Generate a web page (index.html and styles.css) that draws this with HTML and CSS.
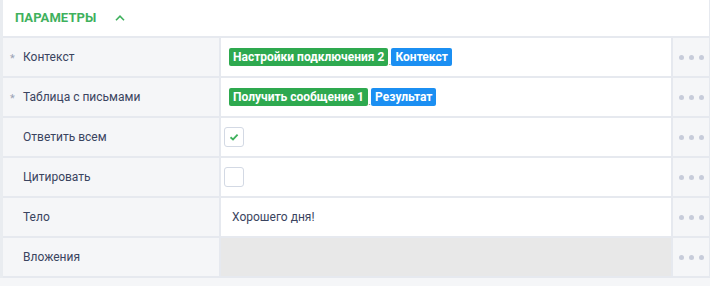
FILE: index.html
```html
<!DOCTYPE html>
<html lang="ru">
<head>
    <meta charset="UTF-8">
    <title>Параметры</title>
    <link rel="stylesheet" href="styles.css">
</head>
<body>
    <div class="panel">
        <div class="panel-header">
            <span class="panel-title">Параметры</span>
            <svg class="chevron" width="10" height="6" viewBox="0 0 10 6"><path d="M1 5.2 L5 1.2 L9 5.2" fill="none" stroke="#3fb15d" stroke-width="1.6"/></svg>
        </div>
        <div class="rows">
            <div class="row">
                <div class="label"><span class="req">*</span>Контекст</div>
                <div class="value">
                    <span class="badge green">Настройки подключения 2</span><span class="sep">.</span><span class="badge blue">Контекст</span>
                </div>
                <div class="more"><i></i><i></i><i></i></div>
            </div>
            <div class="row">
                <div class="label"><span class="req">*</span>Таблица с письмами</div>
                <div class="value">
                    <span class="badge green">Получить сообщение 1</span><span class="sep">.</span><span class="badge blue">Результат</span>
                </div>
                <div class="more"><i></i><i></i><i></i></div>
            </div>
            <div class="row">
                <div class="label">Ответить всем</div>
                <div class="value check-cell">
                    <span class="checkbox">
                        <svg width="10" height="8" viewBox="0 0 10 8"><path d="M1.5 4.2 L4 6.4 L8.6 1.6" fill="none" stroke="#3fb15d" stroke-width="1.8"/></svg>
                    </span>
                </div>
                <div class="more"><i></i><i></i><i></i></div>
            </div>
            <div class="row">
                <div class="label">Цитировать</div>
                <div class="value check-cell"><span class="checkbox"></span></div>
                <div class="more"><i></i><i></i><i></i></div>
            </div>
            <div class="row">
                <div class="label">Тело</div>
                <div class="value text">Хорошего дня!</div>
                <div class="more"><i></i><i></i><i></i></div>
            </div>
            <div class="row">
                <div class="label">Вложения</div>
                <div class="value disabled"></div>
                <div class="more"><i></i><i></i><i></i></div>
            </div>
        </div>
    </div>
</body>
</html>
```

FILE: styles.css
```css
* {
    margin: 0;
    box-sizing: border-box;
}
body {
    font-family: Roboto, "Liberation Sans", sans-serif;
    font-size: 12px;
    color: #3a4460;
    background: #f5f6f8;
}
.panel {
    border-left: 3px solid #e9ecf0;
    border-right: 1px solid #e6e9ef;
    background: #fff;
}
.panel-header {
    height: 38px;
    display: flex;
    align-items: center;
    padding: 0 0 1px 12px;
    border-bottom: 2px solid #e6e9ef;
}
.panel-title {
    text-transform: uppercase;
    font-weight: bold;
    color: #3fb15d;
    font-size: 13px;
    letter-spacing: 0.1px;
}
.chevron {
    margin-left: 19px;
}
.row {
    display: grid;
    grid-template-columns: 216px 1fr 36px;
    column-gap: 2px;
    background: #e6e9ef;
    padding-bottom: 2px;
    height: 40px;
}
.label {
    background: #f5f6f8;
    display: flex;
    align-items: center;
    padding-left: 20px;
    position: relative;
}
.req {
    position: absolute;
    left: 7px;
    top: 14px;
    color: #9aa3b5;
    font-size: 11px;
}
.value {
    background: #fff;
    display: flex;
    align-items: center;
    padding-left: 8px;
}
.value.text {
    padding-left: 11px;
}
.value.check-cell {
    padding-left: 3px;
}
.value.disabled {
    background: #e8e8e8;
}
.badge {
    color: #fff;
    font-weight: bold;
    padding: 1px 4px;
    border-radius: 2px;
    line-height: 16px;
}
.badge.green {
    background: #2ea94f;
}
.badge.blue {
    background: #1b8ff2;
}
.sep {
    font-size: 8px;
    color: #333;
    align-self: flex-end;
    margin-bottom: 9px;
    padding: 0 0.5px;
}
.checkbox {
    width: 20px;
    height: 20px;
    border: 1px solid #d3d9e4;
    border-radius: 3px;
    display: flex;
    align-items: center;
    justify-content: center;
    background: #fff;
}
.more {
    background: #f5f6f8;
    display: flex;
    align-items: center;
    justify-content: center;
    gap: 5px;
}
.more i {
    width: 5px;
    height: 5px;
    border-radius: 50%;
    background: #c7ccda;
}
```
